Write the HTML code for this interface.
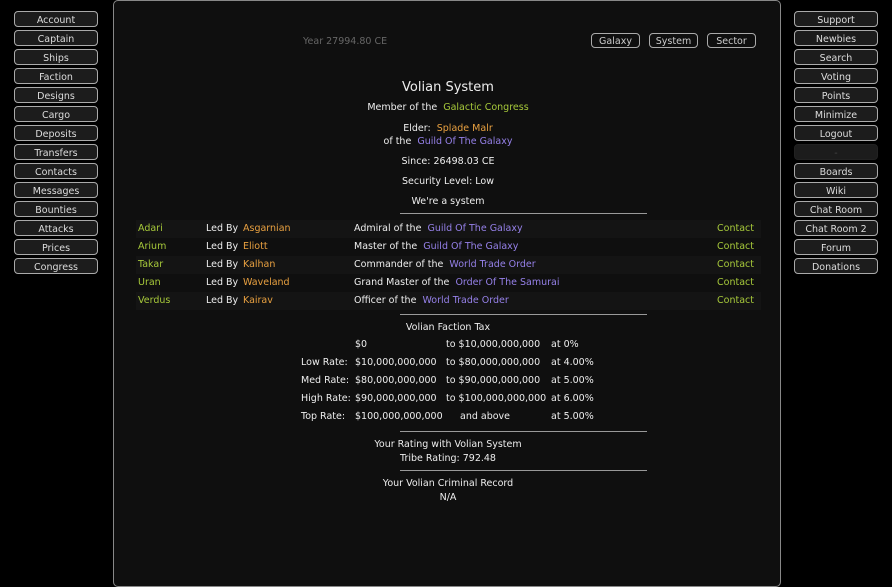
<!DOCTYPE html>
<html><head><meta charset="utf-8"><style>
body{margin:0;width:892px;height:587px;background:#000;font-family:"DejaVu Sans","Liberation Sans",sans-serif;font-size:9.5px;color:#eee;position:relative;overflow:hidden}
.b{position:absolute;width:82px;height:14px;border:1px solid #aaa;border-radius:4px;background:#1c1c1c;color:#ddd;text-align:center;line-height:17px;font-size:9.5px}
#main{position:absolute;left:113px;top:0;width:666px;height:585px;border:1px solid #888;border-radius:5px;background:#0f0f0f}
#in{position:absolute;left:0;top:1px;width:666px;height:580px}
.t{position:absolute;white-space:nowrap;line-height:12px}
.c{position:absolute;left:0;width:668px;text-align:center;white-space:nowrap;line-height:12px}
.g{color:#a6c83a}.o{color:#e8a040}.p{color:#9580e8}
.hr{position:absolute;left:286px;width:247px;height:1px;background:#999}
.row{position:absolute;left:22px;width:625px;height:18px;background:#141414}
.sb{position:absolute;height:13px;border:1px solid #aaa;border-radius:4px;color:#ccc;text-align:center;line-height:15px}
</style></head><body>
<div class="b" style="left:14px;top:11px">Account</div>
<div class="b" style="left:14px;top:30px">Captain</div>
<div class="b" style="left:14px;top:49px">Ships</div>
<div class="b" style="left:14px;top:68px">Faction</div>
<div class="b" style="left:14px;top:87px">Designs</div>
<div class="b" style="left:14px;top:106px">Cargo</div>
<div class="b" style="left:14px;top:125px">Deposits</div>
<div class="b" style="left:14px;top:144px">Transfers</div>
<div class="b" style="left:14px;top:163px">Contacts</div>
<div class="b" style="left:14px;top:182px">Messages</div>
<div class="b" style="left:14px;top:201px">Bounties</div>
<div class="b" style="left:14px;top:220px">Attacks</div>
<div class="b" style="left:14px;top:239px">Prices</div>
<div class="b" style="left:14px;top:258px">Congress</div>

<div class="b" style="left:794px;top:11px">Support</div>
<div class="b" style="left:794px;top:30px">Newbies</div>
<div class="b" style="left:794px;top:49px">Search</div>
<div class="b" style="left:794px;top:68px">Voting</div>
<div class="b" style="left:794px;top:87px">Points</div>
<div class="b" style="left:794px;top:106px">Minimize</div>
<div class="b" style="left:794px;top:125px">Logout</div>
<div class="b" style="left:794px;top:144px;border-color:#222;background:#1c1c1c;color:#444">-</div>
<div class="b" style="left:794px;top:163px">Boards</div>
<div class="b" style="left:794px;top:182px">Wiki</div>
<div class="b" style="left:794px;top:201px">Chat Room</div>
<div class="b" style="left:794px;top:220px">Chat Room 2</div>
<div class="b" style="left:794px;top:239px">Forum</div>
<div class="b" style="left:794px;top:258px">Donations</div>

<div id="main"><div id="in">
<div class="t" style="left:189px;top:34px;color:#666">Year 27994.80 CE</div>
<div class="sb" style="left:477px;top:31px;width:47px">Galaxy</div>
<div class="sb" style="left:535px;top:31px;width:47px">System</div>
<div class="sb" style="left:593px;top:31px;width:47px">Sector</div>

<div class="c" style="top:79px;font-size:13px;line-height:14px">Volian System</div>
<div class="c" style="top:100px">Member of the &nbsp;<span class="g">Galactic Congress</span></div>
<div class="c" style="top:121px">Elder: &nbsp;<span class="o">Splade Malr</span></div>
<div class="c" style="top:134px">of the &nbsp;<span class="p">Guild Of The Galaxy</span></div>
<div class="c" style="top:154px">Since: 26498.03 CE</div>
<div class="c" style="top:174px">Security Level: Low</div>
<div class="c" style="top:194px">We're a system</div>
<div class="hr" style="top:211px"></div>

<div class="row" style="top:218px"></div>
<div class="row" style="top:254px"></div>
<div class="row" style="top:290px"></div>
<div class="t g" style="left:24px;top:221px">Adari</div><div class="t" style="left:92px;top:221px">Led By</div><div class="t o" style="left:129px;top:221px">Asgarnian</div><div class="t" style="left:240px;top:221px">Admiral of the &nbsp;<span class="p">Guild Of The Galaxy</span></div><div class="t g" style="left:603px;top:221px">Contact</div>
<div class="t g" style="left:24px;top:239px">Arium</div><div class="t" style="left:92px;top:239px">Led By</div><div class="t o" style="left:129px;top:239px">Eliott</div><div class="t" style="left:240px;top:239px">Master of the &nbsp;<span class="p">Guild Of The Galaxy</span></div><div class="t g" style="left:603px;top:239px">Contact</div>
<div class="t g" style="left:24px;top:257px">Takar</div><div class="t" style="left:92px;top:257px">Led By</div><div class="t o" style="left:129px;top:257px">Kalhan</div><div class="t" style="left:240px;top:257px">Commander of the &nbsp;<span class="p">World Trade Order</span></div><div class="t g" style="left:603px;top:257px">Contact</div>
<div class="t g" style="left:24px;top:275px">Uran</div><div class="t" style="left:92px;top:275px">Led By</div><div class="t o" style="left:129px;top:275px">Waveland</div><div class="t" style="left:240px;top:275px">Grand Master of the &nbsp;<span class="p">Order Of The Samurai</span></div><div class="t g" style="left:603px;top:275px">Contact</div>
<div class="t g" style="left:24px;top:293px">Verdus</div><div class="t" style="left:92px;top:293px">Led By</div><div class="t o" style="left:129px;top:293px">Kairav</div><div class="t" style="left:240px;top:293px">Officer of the &nbsp;<span class="p">World Trade Order</span></div><div class="t g" style="left:603px;top:293px">Contact</div>
<div class="hr" style="top:312px"></div>

<div class="c" style="top:320px">Volian Faction Tax</div>
<div class="t" style="left:241px;top:337px">$0</div><div class="t" style="left:332px;top:337px">to $10,000,000,000</div><div class="t" style="left:437px;top:337px">at 0%</div>
<div class="t" style="left:187px;top:355px">Low Rate:</div><div class="t" style="left:241px;top:355px">$10,000,000,000</div><div class="t" style="left:332px;top:355px">to $80,000,000,000</div><div class="t" style="left:437px;top:355px">at 4.00%</div>
<div class="t" style="left:187px;top:373px">Med Rate:</div><div class="t" style="left:241px;top:373px">$80,000,000,000</div><div class="t" style="left:332px;top:373px">to $90,000,000,000</div><div class="t" style="left:437px;top:373px">at 5.00%</div>
<div class="t" style="left:187px;top:391px">High Rate:</div><div class="t" style="left:241px;top:391px">$90,000,000,000</div><div class="t" style="left:332px;top:391px">to $100,000,000,000</div><div class="t" style="left:437px;top:391px">at 6.00%</div>
<div class="t" style="left:187px;top:409px">Top Rate:</div><div class="t" style="left:241px;top:409px">$100,000,000,000</div><div class="t" style="left:346px;top:409px">and above</div><div class="t" style="left:437px;top:409px">at 5.00%</div>
<div class="hr" style="top:429px"></div>
<div class="c" style="top:437px">Your Rating with Volian System</div>
<div class="c" style="top:451px">Tribe Rating: 792.48</div>
<div class="hr" style="top:468px"></div>
<div class="c" style="top:476px">Your Volian Criminal Record</div>
<div class="c" style="top:490px">N/A</div>
</div></div>
</body></html>
